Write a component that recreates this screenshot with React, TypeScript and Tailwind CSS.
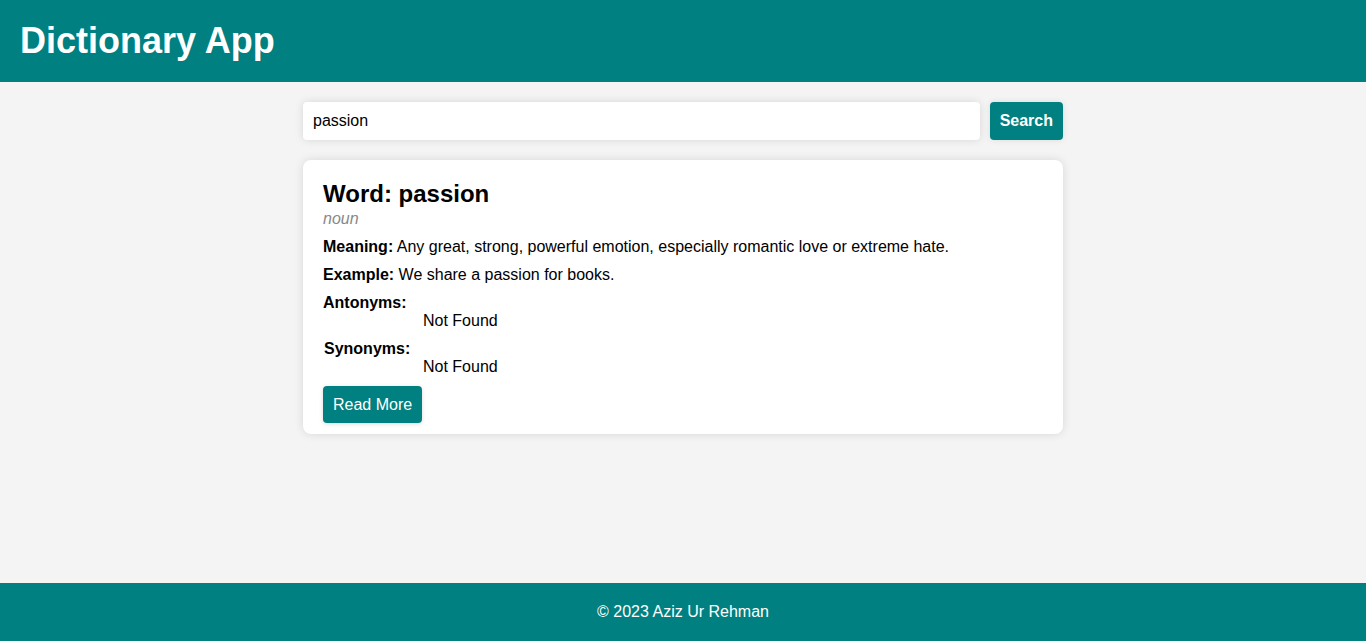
import React from "react";

export default function App() {
  return (
    <div className="min-h-screen flex flex-col bg-[#f4f4f4] text-black" style={{ fontFamily: '"Liberation Sans", Arial, sans-serif' }}>
      <header className="h-[82px] bg-[#008080] flex items-center px-5 shrink-0">
        <h1 className="text-[36px] font-bold text-white leading-none">Dictionary App</h1>
      </header>
      <main className="flex-1 flex flex-col items-center pt-5">
        <div className="w-[760px] flex gap-[10px]">
          <input
            className="flex-1 h-[38px] bg-white rounded-[4px] px-[10px] text-[16px] outline-none shadow-[0_0_8px_rgba(0,0,0,0.12)]"
            defaultValue="passion"
          />
          <button className="h-[38px] px-[10px] bg-[#008080] text-white font-bold text-[16px] rounded-[4px] shadow-[0_0_6px_rgba(0,0,0,0.1)]">
            Search
          </button>
        </div>
        <div className="w-[760px] mt-5 bg-white rounded-[8px] shadow-[0_0_10px_rgba(0,0,0,0.12)] px-5 pt-5 pb-[11px]">
          <h2 className="text-[24px] font-bold leading-[28px]">Word: passion</h2>
          <p className="mt-[2px] italic text-[#888888] text-[16px] leading-[18px]">noun</p>
          <p className="mt-[10px] text-[16px] leading-[18px]">
            <span className="font-bold">Meaning:</span> Any great, strong, powerful emotion, especially romantic love or extreme hate.
          </p>
          <p className="mt-[10px] text-[16px] leading-[18px]">
            <span className="font-bold">Example:</span> We share a passion for books.
          </p>
          <div className="mt-[10px] text-[16px] leading-[18px]">
            <p className="font-bold">Antonyms:</p>
            <p className="pl-[100px]">Not Found</p>
          </div>
          <div className="mt-[10px] text-[16px] leading-[18px]">
            <p className="font-bold pl-px">Synonyms:</p>
            <p className="pl-[100px]">Not Found</p>
          </div>
          <button className="mt-[10px] h-[37px] px-[10px] bg-[#008080] text-white text-[16px] rounded-[4px] shadow-[0_1px_4px_rgba(0,0,0,0.15)]">
            Read More
          </button>
        </div>
      </main>
      <footer className="h-[58px] bg-[#008080] flex items-center justify-center shrink-0">
        <p className="text-white text-[16px]">© 2023 Aziz Ur Rehman</p>
      </footer>
    </div>
  );
}
